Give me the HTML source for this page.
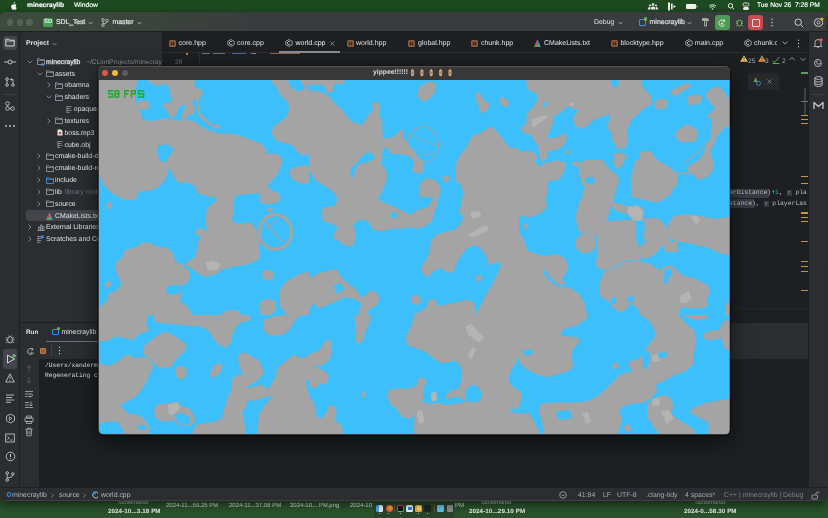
<!DOCTYPE html>
<html><head><meta charset="utf-8">
<style>
*{margin:0;padding:0;box-sizing:border-box}
html,body{width:828px;height:518px;overflow:hidden;background:#1f4a23;font-family:"Liberation Sans",sans-serif;color:#dfe1e5}
.a{position:absolute;white-space:nowrap}
html{-webkit-font-smoothing:antialiased;text-rendering:geometricPrecision}
body>div,body>svg{will-change:transform}
svg.a{overflow:visible}
.mt{font-size:6.7px;line-height:8px;color:#fff;top:2px;-webkit-text-stroke:.15px #fff}
.tt{font-size:7px;line-height:9px;color:#dfe1e5}
.row{font-size:6.9px;line-height:9px;color:#dfe1e5}
.st{font-size:6.9px;line-height:8px;color:#a8abb2}
.mono{font-family:"Liberation Mono",monospace}
.dl{font-size:6.2px;line-height:7px;color:#e6e9e6;font-weight:bold;letter-spacing:.1px}
.dg{font-size:6px;line-height:7px;color:#a3ada3;-webkit-text-stroke:.12px #a3ada3}
</style></head><body>
<!-- desktop -->
<div class="a" style="left:0;top:0;width:828px;height:518px;background:linear-gradient(180deg,#1d4a21 0%,#224c25 90%,#2a522c 100%)"></div>
<!-- menubar -->
<div class="a" style="left:0;top:0;width:828px;height:12px;background:#1e4a21"></div>
<svg class="a" style="left:10px;top:2px" width="7" height="8" viewBox="0 0 9 10"><path d="M6.2 1.2c-.5.6-1.1.9-1.6.9-.1-.6.2-1.2.6-1.6.4-.4 1-.6 1.5-.6 0 .5-.2 1-.5 1.3zM7.4 5.3c0-1 .8-1.5.9-1.6-.5-.7-1.2-.8-1.5-.8-.6-.1-1.2.4-1.6.4-.3 0-.8-.4-1.4-.3C3 3 2.3 3.4 1.9 4.1c-.8 1.4-.2 3.5.6 4.6.4.6.8 1.2 1.4 1.1.6 0 .8-.4 1.4-.4.7 0 .9.4 1.4.4.6 0 1-.6 1.3-1.1.4-.6.6-1.2.6-1.3 0 0-1.2-.5-1.2-2.1z" fill="#fff"/></svg>
<div class="a mt" style="left:27px;font-weight:bold">minecraylib</div>
<div class="a mt" style="left:74px">Window</div>
<svg class="a" style="left:646px;top:2px" width="180" height="9" viewBox="0 0 180 9">
  <g fill="#f0f0f0">
    <circle cx="7" cy="2.5" r="1.3"/><circle cx="4" cy="3.5" r="1"/><circle cx="10" cy="3.5" r="1"/><path d="M4.5 7.5c0-2 1-3 2.5-3s2.5 1 2.5 3z"/><path d="M1.8 7.5c0-1.5.7-2.5 2-2.5l.5.3-.5 2.2zM12.2 7.5c0-1.5-.7-2.5-2-2.5l-.5.3.5 2.2z"/>
    <rect x="22" y="0.5" width="2" height="8"/><rect x="25" y="1.5" width="1.6" height="6"/><path d="M27.5 3l2.5 1.5-2.5 1.5z"/>
    <rect x="40" y="2" width="10" height="5" rx="1"/><rect x="50.5" y="3.5" width="0.8" height="2"/>
  </g>
  <path d="M63 4.2a5 5 0 0 1 7 0M64.3 5.5a3 3 0 0 1 4.4 0" stroke="#f0f0f0" stroke-width="1" fill="none"/><circle cx="66.5" cy="7" r="0.8" fill="#f0f0f0"/>
  <circle cx="84.5" cy="3.8" r="2.2" stroke="#f0f0f0" stroke-width="1" fill="none"/><path d="M86.2 5.5l1.8 1.8" stroke="#f0f0f0" stroke-width="1"/>
  <rect x="97" y="1" width="6" height="3" rx="1.5" fill="none" stroke="#f0f0f0" stroke-width=".9"/><rect x="97" y="5" width="6" height="3" rx="1.5" fill="#f0f0f0"/>
</svg>
<div class="a mt" style="left:757px">Tue Nov 26</div>
<div class="a mt" style="left:795px">7:28 PM</div>

<!-- desktop labels -->
<div class="a dg" style="left:118px;top:500.3px">Screenshot</div>
<div class="a dl" style="left:108px;top:508px">2024-10...3.18 PM</div>
<div class="a dg" style="left:166px;top:502.8px;color:#c9d3c9">2024-11...59.25 PM</div>
<div class="a dg" style="left:229px;top:502.8px;color:#c9d3c9">2024-11...37.06 PM</div>
<div class="a dg" style="left:290px;top:502.8px;color:#c9d3c9">2024-10... PM.png</div>
<div class="a dg" style="left:350px;top:502.8px;color:#c9d3c9">2024-10</div>
<div class="a dg" style="left:455px;top:502.8px;color:#c9d3c9">PM</div>
<div class="a dg" style="left:481px;top:500.3px">Screenshot</div>
<div class="a dl" style="left:469px;top:508px">2024-10...29.10 PM</div>
<div class="a dg" style="left:695px;top:500.3px">Screenshot</div>
<div class="a dl" style="left:684px;top:508px">2024-0...58.30 PM</div>
<!-- dock -->
<div class="a" style="left:374px;top:503px;width:80px;height:16px;background:rgba(40,52,40,.45);border-radius:3px"></div>
<div class="a" style="left:376px;top:504.5px;width:6.6px;height:6.6px;background:linear-gradient(90deg,#4aa3f0 50%,#e8eef5 50%);border-radius:1.5px"></div>
<div class="a" style="left:385.5px;top:504.5px;width:6.6px;height:6.6px;background:radial-gradient(circle at 60% 40%,#f7b733 0,#e8612c 55%,#6a3fb5 100%);border-radius:50%"></div>
<div class="a" style="left:394.3px;top:504px;width:.6px;height:8px;background:#4c574c"></div>
<div class="a" style="left:397px;top:504.5px;width:7px;height:7px;background:#111;border:1px solid #e0356a;border-right-color:#2f9de0;border-bottom-color:#3fbf5f;border-radius:1.5px"></div>
<div class="a" style="left:406px;top:504.5px;width:7px;height:7px;background:#e9eef3;border-radius:1.5px"></div>
<div class="a" style="left:408px;top:506.5px;width:3.5px;height:3px;background:#2f86d8"></div>
<div class="a" style="left:415px;top:504.5px;width:7px;height:7px;background:#f0a43a;border-radius:1.5px"></div>
<div class="a" style="left:416.5px;top:506px;width:4px;height:4px;background:#f5d66a"></div>
<div class="a" style="left:424px;top:504.5px;width:7px;height:7px;background:#1e2420;border-radius:1.5px"></div>
<div class="a" style="left:434px;top:504px;width:.6px;height:8px;background:#4c574c"></div>
<div class="a" style="left:437px;top:505px;width:7px;height:6.5px;background:#62b9ee;border-radius:1px"></div>
<div class="a" style="left:446.5px;top:504.5px;width:5.5px;height:7px;background:#858b87;border-radius:0 0 1px 1px"></div>
<div class="a" style="left:378.5px;top:513px;width:1px;height:1px;background:#b0b8b0"></div>
<div class="a" style="left:388px;top:513px;width:1px;height:1px;background:#b0b8b0"></div>
<div class="a" style="left:400px;top:513px;width:1px;height:1px;background:#b0b8b0"></div>
<div class="a" style="left:418px;top:513px;width:1px;height:1px;background:#b0b8b0"></div>
<div class="a" style="left:427px;top:513px;width:1px;height:1px;background:#b0b8b0"></div>

<!-- IDE -->
<div class="a" style="left:0;top:12px;width:827px;height:489px;background:#1e1f22;border-radius:5px;overflow:hidden;box-shadow:0 0 0 .6px #4a4f4b inset,0 3px 9px rgba(0,0,0,.55)">
  <!-- title bar -->
  <div class="a" style="left:0;top:0;width:828px;height:20px;background:linear-gradient(90deg,#3c4a3d 0px,#3b453c 130px,#393b3d 270px);border-bottom:1px solid #1e1f22"></div>
  <div class="a" style="left:6.8px;top:7.3px;width:6.4px;height:6.4px;border-radius:50%;background:#58605a"></div>
  <div class="a" style="left:16.8px;top:7.3px;width:6.4px;height:6.4px;border-radius:50%;background:#58605a"></div>
  <div class="a" style="left:26.3px;top:7.3px;width:6.4px;height:6.4px;border-radius:50%;background:#58605a"></div>
  <div class="a" style="left:43px;top:5.8px;width:10.3px;height:9.4px;background:#4e9a53;border-radius:2px;font-size:6px;line-height:9.4px;color:#d9eefc;text-align:center;font-weight:bold">SD</div>
  <div class="a tt" style="left:56px;top:6px;font-size:7px;letter-spacing:-.15px;-webkit-text-stroke:.2px #dfe1e5">SDL_Test</div>
  <svg class="a" style="left:88px;top:9px" width="5" height="4"><path d="M.5 1l2 2 2-2" stroke="#b8bcb8" stroke-width=".8" fill="none"/></svg>
  <svg class="a" style="left:101px;top:6px" width="8" height="9" viewBox="0 0 8 9"><circle cx="2" cy="1.8" r="1.3" stroke="#c8ccc8" stroke-width=".8" fill="none"/><circle cx="2" cy="7.2" r="1.3" stroke="#c8ccc8" stroke-width=".8" fill="none"/><circle cx="6" cy="2.5" r="1.3" stroke="#c8ccc8" stroke-width=".8" fill="none"/><path d="M2 3.1v2.8M6 3.8c0 2-4 1.5-4 2.1" stroke="#c8ccc8" stroke-width=".8" fill="none"/></svg>
  <div class="a tt" style="left:112.4px;top:6px;font-size:6.9px;-webkit-text-stroke:.2px #dfe1e5">master</div>
  <svg class="a" style="left:137px;top:9px" width="5" height="4"><path d="M.5 1l2 2 2-2" stroke="#b8bcb8" stroke-width=".8" fill="none"/></svg>
  <div class="a tt" style="left:594px;top:6px;font-size:6.9px">Debug</div>
  <svg class="a" style="left:618px;top:9px" width="5" height="4"><path d="M.5 1l2 2 2-2" stroke="#b8bcb8" stroke-width=".8" fill="none"/></svg>
  <div class="a" style="left:638.5px;top:6.5px;width:7px;height:7.5px;border:1px solid #3b8ee8;border-radius:1px"></div>
  <div class="a" style="left:643.5px;top:5px;width:3.5px;height:3.5px;background:#5fb85f;border-radius:50%"></div>
  <div class="a tt" style="left:649.5px;top:6px;font-size:7px;-webkit-text-stroke:.2px #dfe1e5">minecraylib</div>
  <svg class="a" style="left:687px;top:9px" width="5" height="4"><path d="M.5 1l2 2 2-2" stroke="#b8bcb8" stroke-width=".8" fill="none"/></svg>
  <svg class="a" style="left:701px;top:5px" width="9" height="10" viewBox="0 0 9 10"><path d="M1 2.5h7M1.5 1.5h4.5l1.5 1v1H1.5zM3.5 3.5v5.5h2V3.5" stroke="#c0c4c0" stroke-width=".8" fill="none"/></svg>
  <div class="a" style="left:714.5px;top:3px;width:15px;height:15px;background:#4f9a55;border-radius:3px"></div>
  <svg class="a" style="left:717px;top:5.5px" width="10" height="10" viewBox="0 0 10 10"><path d="M7.5 3A3.2 3.2 0 1 0 8 6.5" stroke="#e8f0e8" stroke-width=".9" fill="none"/><path d="M6.5 1.2l1.5 2-2.2.6" stroke="#e8f0e8" stroke-width=".9" fill="none"/><path d="M4.2 4.2v3l2.2-1.5z" fill="#e8f0e8"/></svg>
  <svg class="a" style="left:735px;top:6px" width="9" height="9" viewBox="0 0 9 9"><ellipse cx="4.5" cy="5" rx="2.3" ry="3" stroke="#6cc46c" stroke-width=".9" fill="none"/><path d="M1 3l1.5 1M8 3L6.5 4M1 5.5h1.5M8 5.5H6.5M1.2 8l1.4-1M7.8 8L6.4 7M3 1.8l.7.8M6 1.8l-.7.8" stroke="#6cc46c" stroke-width=".8"/></svg>
  <div class="a" style="left:748px;top:3px;width:15px;height:15px;background:#c74c4c;border-radius:3px"></div>
  <div class="a" style="left:751.5px;top:6.5px;width:8px;height:8px;border:1px solid #f4dede;border-radius:1px"></div>
  <svg class="a" style="left:770px;top:6px" width="4" height="9"><circle cx="2" cy="1.2" r=".8" fill="#c0c4c0"/><circle cx="2" cy="4.5" r=".8" fill="#c0c4c0"/><circle cx="2" cy="7.8" r=".8" fill="#c0c4c0"/></svg>
  <svg class="a" style="left:794px;top:5.5px" width="10" height="10" viewBox="0 0 10 10"><circle cx="4.2" cy="4.2" r="3.2" stroke="#d0d4d0" stroke-width=".95" fill="none"/><path d="M6.6 6.6l2.6 2.6" stroke="#d0d4d0" stroke-width=".95"/></svg>
  <svg class="a" style="left:813px;top:5px" width="11" height="11" viewBox="0 0 11 11"><path d="M5.5 1l1 1.2 1.5-.3.4 1.5 1.4.6-.5 1.5.5 1.5-1.4.6-.4 1.5-1.5-.3-1 1.2-1-1.2-1.5.3-.4-1.5-1.4-.6.5-1.5-.5-1.5 1.4-.6.4-1.5 1.5.3z" stroke="#d0d4d0" stroke-width=".85" fill="none"/><circle cx="5.5" cy="5.5" r="1.5" stroke="#d0d4d0" stroke-width=".85" fill="none"/><circle cx="9" cy="2" r="1.6" fill="#e8a13c"/></svg>

  <!-- left strip -->
  <div class="a" style="left:0;top:20px;width:20px;height:455px;background:#2b2d30;border-right:1px solid #1e1f22"></div>
  <div class="a" style="left:3px;top:23.5px;width:14px;height:14px;background:#43454a;border-radius:3px"></div>
  <svg class="a" style="left:5px;top:26px" width="10" height="9" viewBox="0 0 10 9"><path d="M.8 1.2h3l1 1h4.4v5.8H.8z" stroke="#dfe1e5" stroke-width=".9" fill="none"/><path d="M.8 3h8.4" stroke="#dfe1e5" stroke-width=".7"/></svg>
  <svg class="a" style="left:4px;top:46px" width="12" height="8" viewBox="0 0 12 8"><circle cx="6" cy="4" r="2" stroke="#c9ccd1" stroke-width=".9" fill="none"/><path d="M0 4h4M8 4h4" stroke="#c9ccd1" stroke-width=".9"/></svg>
  <svg class="a" style="left:5px;top:65px" width="10" height="10" viewBox="0 0 10 10"><circle cx="2" cy="2" r="1.3" stroke="#c9ccd1" stroke-width=".85" fill="none"/><circle cx="2" cy="8" r="1.3" stroke="#c9ccd1" stroke-width=".85" fill="none"/><circle cx="8" cy="8" r="1.3" stroke="#c9ccd1" stroke-width=".85" fill="none"/><path d="M2 3.3v3.4M8 6.7V2.5H5.5M6.5 1.3L5.3 2.5l1.2 1.2" stroke="#c9ccd1" stroke-width=".85" fill="none"/></svg>
  <div class="a" style="left:4px;top:82px;width:12px;height:1px;background:#3c3f44"></div>
  <svg class="a" style="left:5px;top:89px" width="10" height="10" viewBox="0 0 10 10"><circle cx="2.5" cy="2.5" r="1.8" stroke="#c9ccd1" stroke-width=".85" fill="none"/><circle cx="2.5" cy="7.5" r="1.8" stroke="#c9ccd1" stroke-width=".85" fill="none"/><circle cx="7.5" cy="7.5" r="1.8" stroke="#c9ccd1" stroke-width=".85" fill="none"/><path d="M4.3 7.5h1.4M2.5 4.3v1.4" stroke="#c9ccd1" stroke-width=".85"/></svg>
  <svg class="a" style="left:4px;top:112px" width="12" height="4"><circle cx="2" cy="2" r=".9" fill="#c9ccd1"/><circle cx="6" cy="2" r=".9" fill="#c9ccd1"/><circle cx="10" cy="2" r=".9" fill="#c9ccd1"/></svg>
  <!-- lower left strip icons -->
  <svg class="a" style="left:5px;top:322px" width="10" height="10" viewBox="0 0 10 10"><ellipse cx="5" cy="5.8" rx="2.4" ry="3.2" stroke="#c9ccd1" stroke-width=".85" fill="none"/><path d="M.8 3.5l1.8 1M9.2 3.5l-1.8 1M.8 6h1.8M9.2 6H7.4M1 8.8l1.6-1M9 8.8l-1.6-1M3.3 1.5l.8 1M6.7 1.5l-.8 1" stroke="#c9ccd1" stroke-width=".8"/></svg>
  <div class="a" style="left:3px;top:337px;width:14px;height:20px;background:#43454a;border-radius:3px"></div>
  <svg class="a" style="left:5.5px;top:342px" width="10" height="10" viewBox="0 0 10 10"><path d="M1.5 1v8l7-4z" stroke="#dfe1e5" stroke-width=".9" fill="none" stroke-linejoin="round"/><circle cx="8" cy="1.8" r="1.8" fill="#5fb865"/></svg>
  <svg class="a" style="left:5px;top:361px" width="10" height="10" viewBox="0 0 10 10"><path d="M5 .8l4.3 8.2H.7z" stroke="#c9ccd1" stroke-width=".85" fill="none" stroke-linejoin="round"/><path d="M5 3.5v2.5M5 7v.8" stroke="#c9ccd1" stroke-width=".85"/></svg>
  <svg class="a" style="left:5px;top:381px" width="10" height="10" viewBox="0 0 10 10"><path d="M1 2h8M1 4.5h6M1 7h8M1 9.3h5" stroke="#c9ccd1" stroke-width=".85"/></svg>
  <svg class="a" style="left:4.5px;top:401px" width="11" height="11" viewBox="0 0 11 11"><path d="M5.5 1l4 2.3v4.4l-4 2.3-4-2.3V3.3z" stroke="#c9ccd1" stroke-width=".85" fill="none"/><path d="M4.3 3.8v3.4l2.8-1.7z" stroke="#c9ccd1" stroke-width=".7" fill="none"/></svg>
  <svg class="a" style="left:5px;top:421px" width="10" height="10" viewBox="0 0 10 10"><rect x=".7" y="1" width="8.6" height="8" stroke="#c9ccd1" stroke-width=".85" fill="none"/><path d="M2.5 3.5l1.8 1.5-1.8 1.5M5 7h2.5" stroke="#c9ccd1" stroke-width=".8" fill="none"/></svg>
  <svg class="a" style="left:4.5px;top:439px" width="11" height="11" viewBox="0 0 11 11"><circle cx="5.5" cy="5.5" r="4.3" stroke="#c9ccd1" stroke-width=".85" fill="none"/><path d="M5.5 3v3.2M5.5 7.3v.9" stroke="#c9ccd1" stroke-width="1"/></svg>
  <svg class="a" style="left:5px;top:459px" width="10" height="11" viewBox="0 0 10 11"><circle cx="2.2" cy="2" r="1.3" stroke="#c9ccd1" stroke-width=".85" fill="none"/><circle cx="2.2" cy="9" r="1.3" stroke="#c9ccd1" stroke-width=".85" fill="none"/><circle cx="7.8" cy="3" r="1.3" stroke="#c9ccd1" stroke-width=".85" fill="none"/><path d="M2.2 3.3v4.4M7.8 4.3c0 2.5-5.6 2-5.6 3.4" stroke="#c9ccd1" stroke-width=".85" fill="none"/></svg>

  <!-- project panel -->
  <div class="a" style="left:20px;top:20px;width:142px;height:291px;background:#2b2d30"></div>
  <div class="a row" style="left:26px;top:26.5px;font-weight:bold;font-size:6.8px">Project</div>
  <svg class="a" style="left:52px;top:30px" width="5" height="4"><path d="M.5 1l2 2 2-2" stroke="#9da0a8" stroke-width=".8" fill="none"/></svg>
  <svg class="a" style="left:27px;top:47.7px" width="6" height="4"><path d="M.6 .6l2.4 2.4 2.4-2.4" stroke="#8c8f94" stroke-width=".85" fill="none"/></svg><svg class="a" style="left:37px;top:46.2px" width="8" height="7" viewBox="0 0 8 7"><path d="M.5.8h2.3l.8.9h3.9v4.8H.5z" stroke="#9da0a8" stroke-width=".8" fill="none"/><path d="M.5 2.5h7" stroke="#9da0a8" stroke-width=".6"/></svg><div class="a" style="left:41px;top:50.5px;width:3px;height:3px;border-radius:50%;background:#3b8ee8"></div><div class="a row" style="left:46px;top:45.8px;font-size:6.8px;-webkit-text-stroke:.25px #dfe1e5">minecraylib</div><div class="a row" style="left:86px;top:45.8px;color:#8c8f94;font-size:6.65px">~/CLionProjects/minecraylib</div><svg class="a" style="left:36.5px;top:59.5px" width="6" height="4"><path d="M.6 .6l2.4 2.4 2.4-2.4" stroke="#8c8f94" stroke-width=".85" fill="none"/></svg><svg class="a" style="left:46px;top:58px" width="8" height="7" viewBox="0 0 8 7"><path d="M.5.8h2.3l.8.9h3.9v4.8H.5z" stroke="#9da0a8" stroke-width=".8" fill="none"/><path d="M.5 2.5h7" stroke="#9da0a8" stroke-width=".6"/></svg><div class="a row" style="left:55px;top:57.6px;">assets</div><svg class="a" style="left:46.5px;top:70.3px" width="4" height="6"><path d="M.6 .6l2.4 2.4-2.4 2.4" stroke="#8c8f94" stroke-width=".85" fill="none"/></svg><svg class="a" style="left:55px;top:69.8px" width="8" height="7" viewBox="0 0 8 7"><path d="M.5.8h2.3l.8.9h3.9v4.8H.5z" stroke="#9da0a8" stroke-width=".8" fill="none"/><path d="M.5 2.5h7" stroke="#9da0a8" stroke-width=".6"/></svg><div class="a row" style="left:64.5px;top:69.4px;">obamna</div><svg class="a" style="left:45.5px;top:83px" width="6" height="4"><path d="M.6 .6l2.4 2.4 2.4-2.4" stroke="#8c8f94" stroke-width=".85" fill="none"/></svg><svg class="a" style="left:55px;top:81.5px" width="8" height="7" viewBox="0 0 8 7"><path d="M.5.8h2.3l.8.9h3.9v4.8H.5z" stroke="#9da0a8" stroke-width=".8" fill="none"/><path d="M.5 2.5h7" stroke="#9da0a8" stroke-width=".6"/></svg><div class="a row" style="left:64.5px;top:81.1px;">shaders</div><svg class="a" style="left:66px;top:93.5px" width="6" height="7"><path d="M.5 .5h5M.5 2.5h4M.5 4.5h5M.5 6.5h3M1 .5v6" stroke="#9da0a8" stroke-width=".7"/></svg><div class="a row" style="left:73.8px;top:93.1px;">opaque.frag</div><svg class="a" style="left:46.5px;top:105.7px" width="4" height="6"><path d="M.6 .6l2.4 2.4-2.4 2.4" stroke="#8c8f94" stroke-width=".85" fill="none"/></svg><svg class="a" style="left:55px;top:105.2px" width="8" height="7" viewBox="0 0 8 7"><path d="M.5.8h2.3l.8.9h3.9v4.8H.5z" stroke="#9da0a8" stroke-width=".8" fill="none"/><path d="M.5 2.5h7" stroke="#9da0a8" stroke-width=".6"/></svg><div class="a row" style="left:64.5px;top:104.8px;">textures</div><svg class="a" style="left:57px;top:117.2px" width="6" height="7"><path d="M.5.5h3.5l1.5 1.5v4.5h-5z" fill="#e8e8e8"/><circle cx="3" cy="4" r="1.3" fill="#d94444"/></svg><div class="a row" style="left:64.5px;top:116.8px;">boss.mp3</div><svg class="a" style="left:57px;top:129.1px" width="6" height="7"><path d="M.5 .5h5M.5 2.5h4M.5 4.5h5M.5 6.5h3M1 .5v6" stroke="#9da0a8" stroke-width=".7"/></svg><div class="a row" style="left:64.5px;top:128.7px;">cube.obj</div><svg class="a" style="left:37px;top:141.3px" width="4" height="6"><path d="M.6 .6l2.4 2.4-2.4 2.4" stroke="#8c8f94" stroke-width=".85" fill="none"/></svg><svg class="a" style="left:46px;top:140.8px" width="8" height="7" viewBox="0 0 8 7"><path d="M.5.8h2.3l.8.9h3.9v4.8H.5z" stroke="#9da0a8" stroke-width=".8" fill="none"/><path d="M.5 2.5h7" stroke="#9da0a8" stroke-width=".6"/></svg><div class="a row" style="left:55px;top:140.4px;">cmake-build-debug</div><svg class="a" style="left:37px;top:153px" width="4" height="6"><path d="M.6 .6l2.4 2.4-2.4 2.4" stroke="#8c8f94" stroke-width=".85" fill="none"/></svg><svg class="a" style="left:46px;top:152.5px" width="8" height="7" viewBox="0 0 8 7"><path d="M.5.8h2.3l.8.9h3.9v4.8H.5z" stroke="#9da0a8" stroke-width=".8" fill="none"/><path d="M.5 2.5h7" stroke="#9da0a8" stroke-width=".6"/></svg><div class="a row" style="left:55px;top:152.1px;">cmake-build-release</div><svg class="a" style="left:37px;top:165px" width="4" height="6"><path d="M.6 .6l2.4 2.4-2.4 2.4" stroke="#8c8f94" stroke-width=".85" fill="none"/></svg><svg class="a" style="left:46px;top:164.5px" width="8" height="7" viewBox="0 0 8 7"><path d="M.5.8h2.3l.8.9h3.9v4.8H.5z" stroke="#4a9ce8" stroke-width=".8" fill="none"/><path d="M.5 2.5h7" stroke="#4a9ce8" stroke-width=".6"/></svg><div class="a row" style="left:55px;top:164.1px;">include</div><svg class="a" style="left:37px;top:176.8px" width="4" height="6"><path d="M.6 .6l2.4 2.4-2.4 2.4" stroke="#8c8f94" stroke-width=".85" fill="none"/></svg><svg class="a" style="left:46px;top:176.3px" width="8" height="7" viewBox="0 0 8 7"><path d="M.5.8h2.3l.8.9h3.9v4.8H.5z" stroke="#9da0a8" stroke-width=".8" fill="none"/><path d="M.5 2.5h7" stroke="#9da0a8" stroke-width=".6"/></svg><div class="a row" style="left:55px;top:175.9px;">lib</div><div class="a row" style="left:65px;top:175.9px;color:#6f737a">library root</div><svg class="a" style="left:37px;top:188.5px" width="4" height="6"><path d="M.6 .6l2.4 2.4-2.4 2.4" stroke="#8c8f94" stroke-width=".85" fill="none"/></svg><svg class="a" style="left:46px;top:188px" width="8" height="7" viewBox="0 0 8 7"><path d="M.5.8h2.3l.8.9h3.9v4.8H.5z" stroke="#9da0a8" stroke-width=".8" fill="none"/><path d="M.5 2.5h7" stroke="#9da0a8" stroke-width=".6"/></svg><div class="a row" style="left:55px;top:187.6px;">source</div><div class="a" style="left:26px;top:198.3px;width:136px;height:10.5px;background:#43454a;border-radius:3px 0 0 3px"></div><svg class="a" style="left:46px;top:199.6px" width="7" height="8" viewBox="0 0 7 8"><path d="M3.5.3L6.8 7.7H.2z" fill="#3a8ee6"/><path d="M3.5.3L.2 7.7h3.3z" fill="#e53d3d"/><path d="M.2 7.7h6.6L3.5 4.8z" fill="#4cb050"/></svg><div class="a row" style="left:55px;top:199.7px;">CMakeLists.txt</div><svg class="a" style="left:28px;top:212.3px" width="4" height="6"><path d="M.6 .6l2.4 2.4-2.4 2.4" stroke="#8c8f94" stroke-width=".85" fill="none"/></svg><svg class="a" style="left:37px;top:211.8px" width="8" height="7"><path d="M.5 6.5h7M1.5 6.5V3h1.5v3.5M3.5 6.5V1h1.5v5.5M5.5 6.5V2.5H7v4" stroke="#9da0a8" stroke-width=".75" fill="none"/></svg><div class="a row" style="left:46px;top:211.4px;">External Libraries</div><svg class="a" style="left:28px;top:224px" width="4" height="6"><path d="M.6 .6l2.4 2.4-2.4 2.4" stroke="#8c8f94" stroke-width=".85" fill="none"/></svg><svg class="a" style="left:37px;top:223px" width="7" height="8"><path d="M.5 1.5h4M.5 3.5h4M.5 5.5h4M.5 7.5h3M1 1v6.5" stroke="#9da0a8" stroke-width=".7"/><circle cx="5.3" cy="1.8" r="1.6" fill="#3b8ee8"/></svg><div class="a row" style="left:46px;top:223.1px;">Scratches and Consoles</div>
  <!-- run panel -->
  <!-- editor -->
  <div class="a" style="left:162px;top:20px;width:646px;height:455px;background:#1e1f22"></div>
  <div class="a" style="left:162px;top:40px;width:646px;height:1px;background:#2b2d30"></div>
  <div class="a" style="left:169px;top:27.5px;width:7px;height:7px;background:#8a5a3c;border-radius:1.5px"></div><svg class="a" style="left:169px;top:27.5px" width="7" height="7"><path d="M2.5 1.5v4M4.5 1.5v4M1.5 3h4M1.5 4.3h4" stroke="#2b1d14" stroke-width=".6"/></svg><div class="a" style="left:178.6px;top:26.5px;font-size:7px;line-height:9px;color:#dfe1e5;">core.hpp</div><svg class="a" style="left:226.5px;top:27px" width="8" height="8" viewBox="0 0 8 8"><path d="M4 .5L7.2 2.3v3.4L4 7.5.8 5.7V2.3z" stroke="#c9ccd1" stroke-width=".7" fill="none"/><path d="M5.2 3A1.6 1.6 0 1 0 5.2 5" stroke="#c9ccd1" stroke-width=".8" fill="none"/></svg><div class="a" style="left:237px;top:26.5px;font-size:7px;line-height:9px;color:#dfe1e5;">core.cpp</div><svg class="a" style="left:284.5px;top:27px" width="8" height="8" viewBox="0 0 8 8"><path d="M4 .5L7.2 2.3v3.4L4 7.5.8 5.7V2.3z" stroke="#c9ccd1" stroke-width=".7" fill="none"/><path d="M5.2 3A1.6 1.6 0 1 0 5.2 5" stroke="#c9ccd1" stroke-width=".8" fill="none"/></svg><div class="a" style="left:295.5px;top:26.5px;font-size:7px;line-height:9px;color:#dfe1e5;color:#eceef2;">world.cpp</div><div class="a" style="left:346.5px;top:27.5px;width:7px;height:7px;background:#8a5a3c;border-radius:1.5px"></div><svg class="a" style="left:346.5px;top:27.5px" width="7" height="7"><path d="M2.5 1.5v4M4.5 1.5v4M1.5 3h4M1.5 4.3h4" stroke="#2b1d14" stroke-width=".6"/></svg><div class="a" style="left:356px;top:26.5px;font-size:7px;line-height:9px;color:#dfe1e5;">world.hpp</div><div class="a" style="left:408px;top:27.5px;width:7px;height:7px;background:#8a5a3c;border-radius:1.5px"></div><svg class="a" style="left:408px;top:27.5px" width="7" height="7"><path d="M2.5 1.5v4M4.5 1.5v4M1.5 3h4M1.5 4.3h4" stroke="#2b1d14" stroke-width=".6"/></svg><div class="a" style="left:418.1px;top:26.5px;font-size:7px;line-height:9px;color:#dfe1e5;">global.hpp</div><div class="a" style="left:471px;top:27.5px;width:7px;height:7px;background:#8a5a3c;border-radius:1.5px"></div><svg class="a" style="left:471px;top:27.5px" width="7" height="7"><path d="M2.5 1.5v4M4.5 1.5v4M1.5 3h4M1.5 4.3h4" stroke="#2b1d14" stroke-width=".6"/></svg><div class="a" style="left:480.9px;top:26.5px;font-size:7px;line-height:9px;color:#dfe1e5;">chunk.hpp</div><svg class="a" style="left:534.2px;top:27px" width="7" height="8" viewBox="0 0 7 8"><path d="M3.5.3L6.8 7.7H.2z" fill="#3a8ee6"/><path d="M3.5.3L.2 7.7h3.3z" fill="#e53d3d"/><path d="M.2 7.7h6.6L3.5 4.8z" fill="#4cb050"/></svg><div class="a" style="left:544px;top:26.5px;font-size:7px;line-height:9px;color:#dfe1e5;">CMakeLists.txt</div><div class="a" style="left:611px;top:27.5px;width:7px;height:7px;background:#8a5a3c;border-radius:1.5px"></div><svg class="a" style="left:611px;top:27.5px" width="7" height="7"><path d="M2.5 1.5v4M4.5 1.5v4M1.5 3h4M1.5 4.3h4" stroke="#2b1d14" stroke-width=".6"/></svg><div class="a" style="left:620.4px;top:26.5px;font-size:7px;line-height:9px;color:#dfe1e5;">blocktype.hpp</div><svg class="a" style="left:685px;top:27px" width="8" height="8" viewBox="0 0 8 8"><path d="M4 .5L7.2 2.3v3.4L4 7.5.8 5.7V2.3z" stroke="#c9ccd1" stroke-width=".7" fill="none"/><path d="M5.2 3A1.6 1.6 0 1 0 5.2 5" stroke="#c9ccd1" stroke-width=".8" fill="none"/></svg><div class="a" style="left:694.8px;top:26.5px;font-size:7px;line-height:9px;color:#dfe1e5;">main.cpp</div><svg class="a" style="left:744px;top:27px" width="8" height="8" viewBox="0 0 8 8"><path d="M4 .5L7.2 2.3v3.4L4 7.5.8 5.7V2.3z" stroke="#c9ccd1" stroke-width=".7" fill="none"/><path d="M5.2 3A1.6 1.6 0 1 0 5.2 5" stroke="#c9ccd1" stroke-width=".8" fill="none"/></svg><div class="a" style="left:754px;top:26.5px;font-size:7px;line-height:9px;color:#dfe1e5;"><span style="display:inline-block;width:23px;overflow:hidden;vertical-align:top">chunk.cpp</span></div><div class="a" style="left:279px;top:39px;width:61px;height:1.5px;background:#8c8f94"></div><svg class="a" style="left:330px;top:28.5px" width="5" height="5"><path d="M.5.5l4 4M4.5.5l-4 4" stroke="#9da0a8" stroke-width=".8"/></svg><svg class="a" style="left:782px;top:29px" width="6" height="4"><path d="M.6 .6l2.4 2.4 2.4-2.4" stroke="#b0b3b8" stroke-width=".85" fill="none"/></svg><svg class="a" style="left:796.5px;top:26.5px" width="3" height="9"><circle cx="1.5" cy="1.2" r=".7" fill="#b0b3b8"/><circle cx="1.5" cy="4.5" r=".7" fill="#b0b3b8"/><circle cx="1.5" cy="7.8" r=".7" fill="#b0b3b8"/></svg>
  <div class="a" style="left:202px;top:41px;width:8px;height:1.2px;background:#6d6f74"></div>
  <div class="a" style="left:213px;top:41px;width:12px;height:1.2px;background:#6d6f74"></div>
  <div class="a" style="left:232px;top:41px;width:14px;height:1.2px;background:#3f6f9e"></div>
  <div class="a" style="left:251px;top:41px;width:5px;height:1.2px;background:#7d7f84"></div>
  <div class="a" style="left:270px;top:41px;width:30px;height:1.2px;background:#8a6550"></div>
  <div class="a" style="left:186px;top:41px;width:2px;height:1.5px;background:#c77a3c"></div>
  <div class="a" style="left:199px;top:41px;width:1px;height:20px;background:#2b2d30"></div>
  <div class="a" style="left:175px;top:46.5px;font-size:6.5px;line-height:8px;color:#6f737a">28</div>
  <!-- right editor strip parts -->
  <div class="a mono" style="left:730px;top:176.5px;width:39px;height:9px;background:#393b40"></div>
  <div class="a mono" style="left:730px;top:187px;width:24px;height:9px;background:#393b40"></div>
  <div class="a mono" style="left:729px;top:177px;font-size:6.4px;line-height:8px;color:#bcbec4">erDistance<span style="color:#bcbec4">)+</span><span style="color:#2aacb8">1</span>, <span style="background:#393b40;color:#8c8f94;font-size:5px;padding:0 1px">z</span> pla</div>
  <div class="a mono" style="left:729px;top:187.5px;font-size:6.4px;line-height:8px;color:#bcbec4">stance), <span style="background:#393b40;color:#8c8f94;font-size:5px;padding:0 1px">z</span> playerLas</div>
  <!-- warnings -->
  <svg class="a" style="left:740px;top:43px" width="8" height="7" viewBox="0 0 8 7"><path d="M4 .3l3.8 6.4H.2z" fill="#f2c55c"/><path d="M4 2.3v2.3M4 5.3v.6" stroke="#3a2f10" stroke-width=".8"/></svg>
  <div class="a" style="left:748px;top:45.8px;font-size:6.6px;line-height:8px;color:#a8abb2">25</div>
  <svg class="a" style="left:757.5px;top:43px" width="8" height="7" viewBox="0 0 8 7"><path d="M4 .3l3.8 6.4H.2z" fill="#d99a4e"/><path d="M4 2.3v2.3M4 5.3v.6" stroke="#3a2f10" stroke-width=".8"/></svg>
  <div class="a" style="left:765px;top:45.8px;font-size:6.6px;line-height:8px;color:#a8abb2">3</div>
  <svg class="a" style="left:772px;top:43.5px" width="8" height="8" viewBox="0 0 8 8"><path d="M.5 4.5l2 2L7.5 1M.5 7.5h7" stroke="#5fb865" stroke-width=".9" fill="none"/></svg>
  <div class="a" style="left:782px;top:45.8px;font-size:6.6px;line-height:8px;color:#a8abb2">2</div>
  <svg class="a" style="left:789px;top:44.5px" width="6" height="4"><path d="M.5 3l2.5-2.5L5.5 3" stroke="#a8abb2" stroke-width=".8" fill="none"/></svg>
  <svg class="a" style="left:800px;top:44.5px" width="6" height="4"><path d="M.5 1l2.5 2.5L5.5 1" stroke="#a8abb2" stroke-width=".8" fill="none"/></svg>
  <!-- floating widget -->
  <div class="a" style="left:747.5px;top:61px;width:31.5px;height:16.5px;background:#26282b;border-radius:2px"></div>
  <svg class="a" style="left:753px;top:64.5px" width="8" height="9" viewBox="0 0 8 9"><path d="M2.5.5L.5 5h4z" fill="#4caf50"/><path d="M2.5.5l2 4.5" stroke="#e05050" stroke-width=".6"/><circle cx="5.5" cy="6.3" r="2" stroke="#3d8ee0" stroke-width=".9" fill="none"/></svg>
  <svg class="a" style="left:767px;top:66.5px" width="5" height="5"><path d="M.5.5l4 4M4.5.5l-4 4" stroke="#8c8f94" stroke-width=".8"/></svg>
  <!-- scrollbar marks -->
  <div class="a" style="left:801px;top:60px;width:7px;height:1.5px;background:#5a9e60"></div>
  <div class="a" style="left:803.5px;top:76px;width:2px;height:28px;background:#3e4044;border-radius:1px"></div>
  <div class="a" style="left:801px;top:88.5px;width:7px;height:1.2px;background:#6f737a"></div>
  <div class="a" style="left:801px;top:103px;width:7px;height:1.2px;background:#c8914a"></div>
  <div class="a" style="left:801px;top:107px;width:7px;height:1.2px;background:#c8914a"></div>
  <div class="a" style="left:801px;top:111px;width:7px;height:1.2px;background:#c8914a"></div>
  <div class="a" style="left:801px;top:164px;width:7px;height:1.2px;background:#c8914a"></div>
  <div class="a" style="left:801px;top:171px;width:7px;height:1.2px;background:#c8914a"></div>
  <div class="a" style="left:801px;top:200px;width:7px;height:1.8px;background:#c8914a"></div>
  <div class="a" style="left:801px;top:204.5px;width:7px;height:1.2px;background:#c8914a"></div>
  <div class="a" style="left:801px;top:208.5px;width:7px;height:1.2px;background:#c8914a"></div>
  <div class="a" style="left:801px;top:229px;width:7px;height:1.2px;background:#c8914a"></div>
  <div class="a" style="left:801px;top:248.5px;width:7px;height:1.2px;background:#c8914a"></div>
  <div class="a" style="left:801px;top:254px;width:7px;height:1.2px;background:#c8914a"></div>
  <div class="a" style="left:801px;top:259px;width:7px;height:1.2px;background:#c8914a"></div>
  <div class="a" style="left:801px;top:277.5px;width:7px;height:1.2px;background:#c8914a"></div>
  <div class="a" style="left:162px;top:296px;width:646px;height:1px;background:#25272a"></div>
  <div class="a" style="left:20px;top:310px;width:788px;height:165px;background:#2b2d30;border-top:1px solid #1e1f22"></div>
  <div class="a" style="left:39px;top:347px;width:769px;height:128px;background:#1e1f22"></div>
  <!--RUNBG-->
  <div class="a row" style="left:26px;top:315.5px;font-weight:bold;font-size:6.4px">Run</div>
  <div class="a" style="left:52px;top:316.5px;width:6.5px;height:6.5px;border:1px solid #3b8ee8;border-radius:1px"></div>
  <div class="a" style="left:56.5px;top:315px;width:3px;height:3px;background:#5fb85f;border-radius:50%"></div>
  <div class="a row" style="left:61.5px;top:315.5px;font-size:6.9px">minecraylib</div>
  <div class="a" style="left:46px;top:329px;width:116px;height:1px;background:#6f737a"></div>
  <svg class="a" style="left:25.5px;top:334.5px" width="9" height="9" viewBox="0 0 9 9"><path d="M7 2.5A3 3 0 1 0 7.5 5.5" stroke="#c9ccd1" stroke-width=".85" fill="none"/><path d="M5.8 1l1.4 1.6-1.9.6" stroke="#c9ccd1" stroke-width=".8" fill="none"/><path d="M4.5 4.5v3l2.3-1.5z" fill="#5fb865"/></svg>
  <div class="a" style="left:40px;top:335.5px;width:6px;height:6.5px;background:#9b5b38;border:1px solid #c77a4a;border-radius:1px"></div>
  <div class="a" style="left:51px;top:333px;width:1px;height:11px;background:#43454a"></div>
  <svg class="a" style="left:58px;top:334px" width="3" height="9"><circle cx="1.5" cy="1.2" r=".7" fill="#c9ccd1"/><circle cx="1.5" cy="4.5" r=".7" fill="#c9ccd1"/><circle cx="1.5" cy="7.8" r=".7" fill="#c9ccd1"/></svg>
  <!--CONSBG-->
  <div class="a mono" style="left:45px;top:349.5px;font-size:6.3px;line-height:8px;color:#dcdfe4">/Users/xanderm</div>
  <div class="a mono" style="left:45px;top:360px;font-size:6.3px;line-height:8px;color:#dcdfe4">Regenerating c</div>
  <svg class="a" style="left:24px;top:351px" width="10" height="90" viewBox="0 0 10 90">
    <path d="M5 8.5V2.5M2.8 4.7L5 2.5l2.2 2.2" stroke="#5d6066" stroke-width=".8" fill="none"/>
    <path d="M5 14v6M2.8 17.8L5 20l2.2-2.2" stroke="#5d6066" stroke-width=".8" fill="none"/>
    <path d="M1 28.5h8M1 31h6.5c1.2 0 1.2 2.5 0 2.5H5M1 33.5h2.5M6 32.5l-1 1 1 1" stroke="#b8bbc0" stroke-width=".75" fill="none"/>
    <path d="M1 39.5h4M1 42h4M1 44.5h8M7 38.5v4.5M5.5 41.5L7 43l1.5-1.5" stroke="#b8bbc0" stroke-width=".75" fill="none"/>
    <path d="M2.5 53h5v2h-5zM1 55h8v3.5H1zM2.5 58.5h5v2h-5z" stroke="#b8bbc0" stroke-width=".75" fill="none"/>
    <path d="M1.5 66.3h7M3.5 66.3v-1.2h3v1.2M2.3 66.3l.6 6.5h4.2l.6-6.5M4 67.8v3.5M6 67.8v3.5" stroke="#b8bbc0" stroke-width=".75" fill="none"/>
  </svg>

  <!-- right strip -->
  <div class="a" style="left:808px;top:20px;width:20px;height:455px;background:#2b2d30;border-left:1px solid #1e1f22"></div>
  <svg class="a" style="left:813px;top:26px" width="10" height="10" viewBox="0 0 10 10"><path d="M2 7.5V4.5a3 3 0 0 1 6 0v3l1 1H1zM4 9.2h2" stroke="#c9ccd1" stroke-width=".85" fill="none"/><circle cx="8" cy="2" r="1.8" fill="#e05555"/></svg>
  <svg class="a" style="left:813px;top:46px" width="10" height="10" viewBox="0 0 10 10"><path d="M8.5 5A3.5 3.5 0 1 1 5 1.5c2 0 3 1.2 3 2.5S7 6 5.5 6 3.5 5 3.5 4.3 4 3 5 3" stroke="#c9ccd1" stroke-width=".85" fill="none"/></svg>
  <svg class="a" style="left:813.5px;top:64px" width="9" height="11" viewBox="0 0 9 11"><ellipse cx="4.5" cy="2" rx="3.7" ry="1.4" stroke="#c9ccd1" stroke-width=".85" fill="none"/><path d="M.8 2v7c0 .8 1.7 1.4 3.7 1.4S8.2 9.8 8.2 9V2M.8 4.5c0 .8 1.7 1.4 3.7 1.4s3.7-.6 3.7-1.4M.8 7c0 .8 1.7 1.4 3.7 1.4S8.2 7.8 8.2 7" stroke="#c9ccd1" stroke-width=".85" fill="none"/></svg>
  <div class="a" style="left:812px;top:82px;width:12px;height:1px;background:#3c3f44"></div>
  <svg class="a" style="left:812.5px;top:89px" width="11" height="9" viewBox="0 0 11 9"><path d="M1 8V1.5l4.5 4 4.5-4V8" stroke="#c9ccd1" stroke-width="1.3" fill="none" stroke-linejoin="round"/></svg>
  <!-- status bar -->
  <div class="a" style="left:0;top:475px;width:828px;height:14px;background:#2b2d30;border-top:1px solid #1e1f22"></div>
  <div class="a" style="left:6.5px;top:480px;width:4.5px;height:5px;border:1px solid #3b8ee8;border-radius:50%"></div>
  <div class="a st" style="left:12px;top:479.8px;color:#b7bac0">minecraylib</div>
  <svg class="a" style="left:51px;top:480.5px" width="3" height="5"><path d="M.5.5l2 2-2 2" stroke="#8c8f94" stroke-width=".7" fill="none"/></svg>
  <div class="a st" style="left:59px;top:479.8px;color:#b7bac0">source</div>
  <svg class="a" style="left:82.5px;top:480.5px" width="3" height="5"><path d="M.5.5l2 2-2 2" stroke="#8c8f94" stroke-width=".7" fill="none"/></svg>
  <svg class="a" style="left:91.5px;top:478.5px" width="8" height="8" viewBox="0 0 8 8"><path d="M6.2 2.2A3 3 0 1 0 6.2 5.8" stroke="#c9ccd1" stroke-width=".9" fill="none"/><circle cx="2.2" cy="2" r="1.5" fill="#3b8ee8"/></svg>
  <div class="a st" style="left:101px;top:479.8px;color:#b7bac0">world.cpp</div>
  <svg class="a" style="left:559px;top:478.5px" width="8" height="8" viewBox="0 0 8 8"><circle cx="4" cy="4" r="3.3" stroke="#a8abb2" stroke-width=".8" fill="none"/><path d="M2.5 3.5L4 5l1.5-1.5" stroke="#a8abb2" stroke-width=".8" fill="none"/></svg>
  <div class="a st" style="left:578px;top:479.8px">41:84</div>
  <div class="a st" style="left:603px;top:479.8px">LF</div>
  <div class="a st" style="left:617px;top:479.8px">UTF-8</div>
  <div class="a st" style="left:646px;top:479.8px">.clang-tidy</div>
  <div class="a st" style="left:685px;top:479.8px">4 spaces*</div>
  <div class="a st" style="left:724px;top:479.8px;color:#7d8087">C++ | minecraylib | Debug</div>
  <div class="a" style="left:0;top:488px;width:828px;height:1px;background:#3e4043"></div>
  <svg class="a" style="left:811px;top:478.5px" width="9" height="9" viewBox="0 0 9 9"><rect x="1" y="4" width="5.5" height="4" rx=".6" stroke="#a8abb2" stroke-width=".8" fill="none"/><path d="M5 4V2.5a1.6 1.6 0 0 1 3.2 0" stroke="#a8abb2" stroke-width=".8" fill="none"/></svg>
</div>

<!-- game window -->
<div class="a" style="left:98.3px;top:65.5px;width:631.7px;height:368.7px;border-radius:5px;background:#383838;box-shadow:0 6px 22px rgba(0,0,0,.6),0 0 0 .5px rgba(0,0,0,.6)"></div>
<div class="a" style="left:98.3px;top:65.5px;width:631.7px;height:14.4px;background:#383838;border-radius:5px 5px 0 0;border-top:.6px solid #555"></div>
<div class="a" style="left:102.3px;top:69.5px;width:6.3px;height:6.3px;border-radius:50%;background:#e0524a"></div>
<div class="a" style="left:112px;top:69.5px;width:6.3px;height:6.3px;border-radius:50%;background:#f0b73c"></div>
<div class="a" style="left:121.8px;top:69.5px;width:6.3px;height:6.3px;border-radius:50%;background:#5c5c5c"></div>
<div class="a" style="left:372.5px;top:68.5px;font-size:6.8px;line-height:8px;color:#d8d8d8;font-weight:bold">yippee!!!!!!</div>
<svg class="a" style="left:408px;top:68px" width="46" height="10" viewBox="0 0 46 10"><defs><linearGradient id="eg" x1="0" y1="0" x2="0" y2="1"><stop offset="0" stop-color="#e9c0ad"/><stop offset=".45" stop-color="#c98b3e"/><stop offset="1" stop-color="#e2ada3"/></linearGradient></defs><g id="emo"><ellipse cx="4.5" cy="4.8" rx="1.7" ry="3.5" fill="url(#eg)"/><ellipse cx="4.5" cy="4.6" rx=".8" ry="1.2" fill="#7f8a94"/></g><use href="#emo" x="9.4"/><use href="#emo" x="18.7"/><use href="#emo" x="28.1"/><use href="#emo" x="37.5"/></svg>
<svg class="a" style="left:0;top:0" width="828" height="518" viewBox="0 0 828 518">
<defs><clipPath id="mc"><path d="M98.8 79.9 H729.8 V429 Q729.8 434 724.8 434 H103.8 Q98.8 434 98.8 429 Z"/></clipPath>
<filter id="nz" x="0" y="0" width="100%" height="100%"><feTurbulence type="fractalNoise" baseFrequency="0.9" numOctaves="1" seed="3"/><feColorMatrix type="matrix" values="0 0 0 0 0.64  0 0 0 0 0.64  0 0 0 0 0.64  0 0 0 -0.9 0.62"/></filter>
<clipPath id="t0"><rect x="99" y="79" width="210" height="118"/></clipPath>
<clipPath id="t1"><rect x="309" y="79" width="210" height="118"/></clipPath>
<clipPath id="t2"><rect x="640" y="79" width="89" height="118"/><rect x="519" y="160" width="121" height="37"/></clipPath>
<clipPath id="t3"><rect x="519" y="79" width="121" height="81"/></clipPath>
<clipPath id="t4"><rect x="99" y="197" width="210" height="118"/></clipPath>
<clipPath id="t5"><rect x="309" y="197" width="210" height="118"/></clipPath>
<clipPath id="t6"><rect x="519" y="197" width="51" height="118"/></clipPath>
<clipPath id="t7"><rect x="570" y="190" width="159" height="70"/></clipPath>
<clipPath id="t8"><rect x="570" y="260" width="159" height="55"/><rect x="540" y="285" width="30" height="30"/></clipPath>
<clipPath id="t9"><rect x="99" y="315" width="210" height="35"/></clipPath>
<clipPath id="t10"><rect x="99" y="350" width="131" height="86"/></clipPath>
<clipPath id="t11"><rect x="230" y="350" width="79" height="86"/></clipPath>
<clipPath id="t12"><rect x="309" y="315" width="210" height="121"/></clipPath>
<clipPath id="t13"><rect x="519" y="315" width="210" height="121"/></clipPath>
</defs>
<g clip-path="url(#mc)">
<rect x="98.8" y="79.9" width="631" height="354.1" fill="#3dbffb"/>
<g clip-path="url(#t0)"><g transform="translate(99,79) scale(0.253623)"><polygon fill="#a4a4a4" points="0,0 155,0 148,25 140,60 143,90 150,110 165,135 172,160 200,167 240,160 270,155 300,162 330,165 350,160 375,168 400,185 440,205 475,215 520,215 560,225 600,240 640,255 660,280 660,295 700,295 720,310 720,340 700,380 665,420 680,440 710,450 715,465 690,490 660,485 640,465 630,450 570,455 540,460 510,478 480,475 420,460 390,450 375,420 345,408 320,410 300,395 275,350 270,375 255,405 230,430 200,440 155,445 150,465 130,475 90,470 50,450 20,420 0,375"/><polygon fill="#a4a4a4" points="252,5 381,5 374,26 390,36 407,45 409,64 397,74 393,88 395,114 400,138 414,148 433,167 452,181 471,177 476,190 466,198 447,188 428,176 409,162 390,143 386,119 386,90 376,81 366,90 381,119 371,138 352,145 343,157 328,164 324,143 333,124 343,110 333,100 314,112 305,138 286,157 276,138 250,102 271,95 286,86 281,57 276,29 252,19"/><polygon fill="#a4a4a4" points="190,0 381,0 381,5 252,19 233,29 200,14"/><polygon fill="#a4a4a4" points="150,88 190,86 202,100 195,118 160,122 145,110"/><polygon fill="#a4a4a4" points="675,0 745,0 750,25 780,50 810,40 828,25 828,300 800,300 780,285 765,262 725,250 695,240 680,210 690,185 715,170 740,150 750,120 745,90 720,70 700,35"/><polygon fill="#a4a4a4" points="790,0 828,0 828,25 810,30"/><polygon fill="#a4a4a4" points="750,360 780,345 810,340 828,345 828,410 800,415 770,400 755,385"/></g></g>
<g clip-path="url(#t1)"><g transform="translate(309,79) scale(0.253623)"><polygon fill="#a4a4a4" points="0,0 140,0 140,18 100,20 95,50 70,55 60,25 0,22"/><polygon fill="#a4a4a4" points="0,50 25,45 55,55 85,75 105,100 130,120 150,148 168,170 210,180 225,160 240,135 255,118 247,100 258,88 276,97 281,125 278,150 289,162 289,202 289,290 289,316 282,330 302,356 309,383 295,430 282,457 269,477 114,477 94,444 67,424 40,410 20,390 0,356"/><polygon fill="#a4a4a4" points="289,202 295,236 329,229 349,215 362,200 373,203.5 369.5,226 388.4,253 407.7,276 426.6,302 449.5,325 453.4,359 440,375 407.7,365 415,333 403.8,310 373,299 339,295 322,296 309,269 295,276 289,290"/><ellipse cx="450" cy="259" rx="61" ry="70" fill="none" stroke="#a4a4a4" stroke-width="4"/><polyline fill="none" stroke="#a4a4a4" stroke-width="3" stroke-linejoin="round" stroke-linecap="round" points="395,215 430,235 470,250 505,262"/><polyline fill="none" stroke="#a4a4a4" stroke-width="3" stroke-linejoin="round" stroke-linecap="round" points="420,280 450,300 490,290"/><polygon fill="#a4a4a4" points="440,30 470,10 500,15 500,45 480,75 450,90 428,70 430,45"/><polygon fill="#a4a4a4" points="655,60 670,50 690,85 712,95 705,125 680,135 665,100"/><polygon fill="#a4a4a4" points="750,80 765,70 790,90 785,110 760,105"/><polygon fill="#a4a4a4" points="720,185 760,230 790,270 828,275 828,465 610,465 600,420 580,400 575,345 595,300 620,270 640,230 680,210"/><polygon fill="#a4a4a4" points="440,410 465,390 500,400 520,430 515,465 435,465"/><polygon fill="#a4a4a4" points="525,385 550,380 555,400 535,410"/></g></g>
<g clip-path="url(#t2)"><g transform="translate(519,79) scale(0.253623)"><polygon fill="#a4a4a4" points="30,0 480,0 490,35 520,65 522,100 500,112 470,135 445,165 438,190 425,215 420,250 400,275 375,275 365,250 370,220 362,195 345,190 360,165 358,140 325,150 295,165 265,180 240,195 215,185 212,155 225,125 205,108 180,115 150,125 130,150 120,185 125,215 150,230 180,215 190,210 190,250 175,280 145,285 120,280 105,300 95,330 80,310 75,270 55,260 50,225 25,220 5,200 10,180 30,160 25,130 45,105 55,80 40,45"/><polygon fill="#a4a4a4" points="0,290 30,285 60,320 80,345 100,332 150,320 185,330 180,360 160,395 140,400 120,400 110,430 110,465 0,465"/><polygon fill="#a4a4a4" points="240,330 270,315 330,320 360,360 380,370 395,395 385,430 370,465 255,465 260,430 245,400 235,370"/><polygon fill="#a4a4a4" points="208,330 230,322 242,338 225,348"/><polygon fill="#a4a4a4" points="375,310 405,290 420,310 405,345 385,355 370,330"/><polygon fill="#a4a4a4" points="480,285 520,285 545,320 590,345 625,375 625,415 600,440 570,465 445,465 440,400 455,335"/><polygon fill="#a4a4a4" points="594,46 664,15 683,27 614,69"/><polygon fill="#a4a4a4" points="530,95 556,77 579,81 587,100 568,123 540,115"/><polygon fill="#a4a4a4" points="660,73 698,58 725,73 710,100 671,104"/><polygon fill="#a4a4a4" points="733,58 760,35 790,29 814,58 828,77 828,185 810,192 783,223 767,261 754,288 767,331 764,361 744,385 710,398 694,385 664,361 671,338 706,323 729,292 737,261 756,231 757,185 760,158 741,146 773,115 744,81"/><polygon fill="#a4a4a4" points="618,208 664,177 706,204 698,246 641,250 618,231"/><polyline fill="none" stroke="#a4a4a4" stroke-width="6" stroke-linejoin="round" stroke-linecap="round" points="625,372 680,372 725,355"/><polyline fill="none" stroke="#a4a4a4" stroke-width="4" stroke-linejoin="round" stroke-linecap="round" points="655,330 690,300 720,280 735,250"/></g></g>
<g clip-path="url(#t3)"><g transform="translate(519,79) scale(0.156371)"><polygon fill="#a4a4a4" points="45,0 585,0 590,40 615,52 635,40 640,0 780,0 780,210 720,260 690,330 700,400 680,440 630,450 600,400 590,340 560,310 580,260 580,225 540,240 480,260 450,290 400,320 360,300 345,250 370,215 385,195 350,195 320,175 290,195 250,225 215,240 220,280 200,330 180,370 220,380 260,365 300,345 305,380 290,420 250,450 190,460 170,520 140,520 120,430 80,360 20,340 10,310 45,290 50,220 80,190 115,140 115,95 80,80 50,60"/><polygon fill="#a4a4a4" points="0,470 50,455 110,480 120,520 0,520"/><polygon fill="#a4a4a4" points="295,465 320,455 328,475 305,485"/><polygon fill="#a4a4a4" points="600,480 650,470 690,490 680,520 610,520"/></g></g>
<g clip-path="url(#t4)"><g transform="translate(99,197) scale(0.253623)"><polygon fill="#a4a4a4" points="460,0 535,0 530,55 525,95 545,105 600,100 620,130 630,170 635,210 630,245 590,265 530,275 490,285 460,305 420,315 395,305 370,285 345,270 330,270 350,255 375,240 385,215 390,175 405,160 380,145 385,125 410,125 425,135 420,90 425,45 465,12"/><polygon fill="#a4a4a4" points="0,440 30,410 40,380 70,370 90,340 80,320 65,290 65,260 95,235 100,210 140,200 175,178 200,180 230,195 270,200 290,220 300,250 330,270 355,290 360,320 345,340 330,350 325,380 320,410 345,430 370,465 0,465"/><polygon fill="#a4a4a4" points="80,320 105,308 130,320 125,340 95,345"/><polygon fill="#a4a4a4" points="20,345 40,330 52,340 35,360"/><polygon fill="#a4a4a4" points="30,25 45,18 50,35 38,50 30,45"/><polygon fill="#a4a4a4" points="80,0 150,0 140,12 100,12"/><ellipse cx="695" cy="138" rx="64" ry="68" fill="none" stroke="#a4a4a4" stroke-width="13"/><polyline fill="none" stroke="#a4a4a4" stroke-width="5" stroke-linejoin="round" stroke-linecap="round" points="655,98 690,140 722,177"/><polyline fill="none" stroke="#a4a4a4" stroke-width="4" stroke-linejoin="round" stroke-linecap="round" points="700,90 680,110 655,120"/><polygon fill="#a4a4a4" points="660,45 680,42 688,55 668,60"/><polygon fill="#a4a4a4" points="630,0 720,0 710,20 670,30 640,25"/><polygon fill="#a4a4a4" points="640,295 665,285 690,300 685,325 655,330"/><polygon fill="#a4a4a4" points="710,375 730,340 760,320 800,300 828,295 828,465 740,465 715,430"/><polygon fill="#a4a4a4" points="630,420 660,400 695,410 700,440 680,465 640,465"/><polygon fill="#a4a4a4" points="480,465 510,445 555,450 560,465"/></g></g>
<g clip-path="url(#t5)"><g transform="translate(309,197) scale(0.253623)"><polygon fill="#a4a4a4" points="115,0 265,0 290,20 330,35 370,55 400,70 430,50 470,40 480,20 490,0 510,0 505,30 495,60 485,95 460,115 430,125 395,120 360,125 320,125 290,135 255,130 230,95 200,90 175,110 185,150 175,190 150,195 120,175 95,160 100,140 115,120 90,105 55,95 50,55 60,40 100,35 110,15"/><polygon fill="#a4a4a4" points="600,0 828,0 828,465 660,465 670,440 690,400 720,350 740,310 750,285 760,270 740,255 710,270 700,240 680,205 650,190 620,205 600,230 580,265 570,295 545,300 520,280 495,290 470,315 450,305 440,280 460,250 475,215 480,175 500,150 530,140 570,130 595,110 610,80 590,55 600,30"/><polygon fill="#a4a4a4" points="0,320 40,300 80,290 110,285 130,320 160,345 190,370 205,395 220,390 240,370 265,375 280,400 265,430 240,440 230,465 195,465 200,440 210,420 175,400 140,395 100,415 65,430 40,440 20,420 0,440"/><polygon fill="#a4a4a4" points="405,390 430,385 445,410 430,425 405,420"/><polygon fill="#a4a4a4" points="410,465 460,440 470,410 495,400 510,430 560,420 620,405 650,415 660,465"/><polygon fill="#a4a4a4" points="655,315 675,305 685,325 665,335"/></g></g>
<g clip-path="url(#t6)"><g transform="translate(519,197) scale(0.253623)"><polygon fill="#a4a4a4" points="0,0 105,0 110,40 85,65 45,80 0,75"/><polygon fill="#a4a4a4" points="15,110 30,105 38,120 22,128"/><polygon fill="#a4a4a4" points="0,140 15,160 35,215 60,220 100,235 145,225 180,240 195,275 185,300 170,320 185,345 175,350 150,340 125,320 100,285 95,300 120,330 150,350 200,360 235,380 255,410 270,465 0,465"/></g></g>
<g clip-path="url(#t7)"><g transform="translate(570,190) scale(0.192029)"><polygon fill="#a4a4a4" points="65,0 240,0 232,35 215,75 210,100 190,160 195,230 140,240 100,225 60,225 40,200 30,140 45,70 65,40"/><polygon fill="#a4a4a4" points="210,60 250,70 300,85 350,80 385,100 385,155 335,160 300,125 240,108 215,80"/><polygon fill="#a4a4a4" points="150,165 330,155 345,175 345,260 360,300 370,370 140,370 140,240"/><polygon fill="#a4a4a4" points="30,260 60,228 115,225 135,250 135,300 100,330 55,325 30,300"/><polygon fill="#a4a4a4" points="385,150 420,145 465,150 500,190 520,210 520,265 490,290 470,300 440,340 400,355 365,350 360,300 395,265 380,240 390,200"/><polygon fill="#a4a4a4" points="510,180 540,135 600,128 650,130 700,140 760,150 828,140 828,340 780,330 720,300 650,285 580,270 560,270 520,250"/><polygon fill="#a4a4a4" points="495,270 560,265 565,320 520,325 490,315"/><polygon fill="#a4a4a4" points="330,0 540,0 520,25 470,60 440,65 380,50 335,40"/></g></g>
<g clip-path="url(#t8)"><g transform="translate(519,197) scale(0.253623)"><polygon fill="#a4a4a4" points="300,248 430,248 400,262 370,280 340,288 310,280"/><polygon fill="#a4a4a4" points="195,355 235,380 255,410 270,470 195,470"/><polygon fill="#a4a4a4" points="325,320 340,290 380,280 420,255 470,250 520,265 555,290 570,275 600,268 625,290 645,310 690,320 720,335 748,350 752,380 740,405 745,430 720,440 690,440 640,435 630,465 480,465 470,440 440,420 420,445 400,455 375,440 350,410 320,390 315,360"/><polygon fill="#a4a4a4" points="815,420 828,415 828,465 812,465"/></g></g>
<g clip-path="url(#t9)"><g transform="translate(99,315) scale(0.253623)"><polygon fill="#a4a4a4" points="0,0 195,0 185,40 200,60 160,75 130,100 100,90 60,85 40,100 0,105"/><polygon fill="#a4a4a4" points="215,0 590,0 600,20 560,30 540,45 525,80 520,110 500,130 470,115 450,90 430,60 400,45 330,40 280,35 230,30 215,20"/><polygon fill="#a4a4a4" points="647,20 690,5 745,0 800,0 780,12 750,60 720,80 670,80 650,60"/><polygon fill="#a4a4a4" points="180,120 230,80 265,65 300,85 340,110 345,140 310,180 280,210 240,205 200,175 175,140"/></g></g>
<g clip-path="url(#t10)"><g transform="translate(99,350) scale(0.166023)"><polygon fill="#a4a4a4" points="0,80 60,95 130,60 150,35 190,30 210,50 260,40 300,50 320,80 330,100 310,140 290,180 270,220 240,260 210,290 170,310 150,320 120,340 90,370 60,395 30,410 0,400"/><polygon fill="#a4a4a4" points="265,0 520,0 490,30 460,60 440,95 400,110 360,105 330,80 300,45 270,25"/><polygon fill="#a4a4a4" points="455,110 490,95 525,110 530,150 500,180 465,160"/><polygon fill="#a4a4a4" points="665,150 690,95 720,80 745,90 730,140 690,170"/><polygon fill="#a4a4a4" points="0,405 39,402 85,370 117,330 150,357 189,389 221,383 254,402 287,435 306,467 303,510 156,510 137,467 111,435 78,428 39,435 0,441"/><polygon fill="#a4a4a4" points="330,360 350,330 420,320 470,310 500,340 540,350 570,390 580,420 560,450 520,460 480,450 450,420 420,430 380,430 340,410"/><polygon fill="#a4a4a4" points="560,510 580,455 640,440 700,430 740,410 770,300 789,260 789,510"/></g></g>
<g clip-path="url(#t11)"><g transform="translate(220,340) scale(0.185328)"><polygon fill="#a4a4a4" points="100,80 130,65 210,110 240,180 200,220 150,250 130,240 120,190 95,100"/><polygon fill="#a4a4a4" points="65,210 100,185 130,200 150,260 220,240 260,265 300,200 310,150 400,80 440,100 486,80 486,520 200,520 210,400 250,340 290,300 240,310 180,330 150,320 140,360 120,390 130,440 140,520 0,520 0,440 40,360 50,300 65,250"/></g></g>
<g clip-path="url(#t12)"><g transform="translate(309,315) scale(0.253623)"><polygon fill="#a4a4a4" points="185,0 245,0 240,30 225,60 215,95 200,115 180,100 185,60 180,20"/><polygon fill="#a4a4a4" points="410,0 828,0 828,165 800,215 785,250 800,280 828,300 828,480 435,480 430,420 445,390 465,355 500,345 540,355 585,350 620,340 600,330 580,320 545,332 535,318 560,300 590,290 600,260 600,205 580,180 555,185 520,190 490,170 460,145 420,130 388,118 380,90 395,60 410,30"/><polygon fill="#a4a4a4" points="315,295 350,290 400,290 425,275 430,250 450,245 465,265 450,290 450,330 440,360 420,390 395,410 365,400 345,370 320,350 310,320"/><polygon fill="#a4a4a4" points="0,155 40,140 55,115 75,95 90,110 85,170 60,195 20,205 60,220 80,240 70,270 40,275 20,290 0,280"/><polygon fill="#a4a4a4" points="0,320 20,345 30,400 50,410 70,380 80,355 100,360 110,385 100,410 130,440 140,480 0,480"/><polygon fill="#a4a4a4" points="205,310 218,300 225,318 210,325"/><polygon fill="#a4a4a4" points="415,395 440,345 470,345 462,400 440,480 415,480"/></g></g>
<g clip-path="url(#t13)"><g transform="translate(519,315) scale(0.253623)"><polygon fill="#a4a4a4" points="0,0 275,0 260,20 230,40 200,50 170,60 165,80 200,85 235,90 240,105 215,130 205,160 215,200 200,220 150,235 110,245 70,235 30,215 5,190 0,160"/><polygon fill="#a4a4a4" points="480,0 630,0 650,25 690,60 700,100 690,150 685,195 660,220 620,235 580,255 540,275 545,300 520,330 490,345 450,350 410,360 395,380 405,410 400,440 385,480 100,480 90,420 80,380 85,350 120,345 170,345 220,345 270,340 310,320 345,290 370,265 400,235 450,220 430,200 440,180 470,175 490,150 510,120 540,80 530,50 510,20"/><polygon fill="#a4a4a4" points="640,0 745,0 740,15 700,20"/><polygon fill="#a4a4a4" points="725,75 760,60 795,60 800,90 760,100 730,95"/><polygon fill="#a4a4a4" points="800,30 828,20 828,140 810,130 800,100 790,60"/><polygon fill="#a4a4a4" points="365,195 385,185 395,205 375,215"/><polygon fill="#a4a4a4" points="505,350 540,325 575,315 600,330 610,360 600,390 640,420 690,450 700,480 560,480 530,440 505,400"/><polygon fill="#a4a4a4" points="670,380 700,360 740,345 800,335 828,330 828,400 790,400 740,420 700,400"/><polygon fill="#a4a4a4" points="800,390 828,385 828,480 805,480"/><polygon fill="#a4a4a4" points="710,380 740,370 828,360 828,480 745,480 748,430 735,405"/><polygon fill="#a4a4a4" points="0,390 40,385 60,420 90,480 0,480"/><polygon fill="#a4a4a4" points="0,300 12,310 10,340 0,345"/><polygon fill="#a4a4a4" points="410,440 430,430 445,450 425,465"/></g></g>
<g clip-path="url(#t0)"><g transform="translate(99,79) scale(0.253623)"><polygon fill="#3dbffb" points="228,262 270,258 296,275 280,300 262,330 240,320 230,295"/></g></g>
<g clip-path="url(#t1)"><g transform="translate(309,79) scale(0.253623)"><polygon fill="#3dbffb" points="215,296 245,289 259,316 222,330 195,336 181,363 175,390 161,377 168,350 195,323"/></g></g>
<g clip-path="url(#t2)"><g transform="translate(519,79) scale(0.253623)"><polygon fill="#3dbffb" points="355,8 385,5 392,25 370,32"/><polygon fill="#3dbffb" points="92,92 110,95 108,110 92,108"/><polygon fill="#3dbffb" points="260,390 295,385 300,410 265,415"/></g></g>
<g clip-path="url(#t3)"><g transform="translate(519,79) scale(0.156371)"><polygon fill="#3dbffb" points="150,150 175,145 180,170 155,178"/></g></g>
<g clip-path="url(#t4)"><g transform="translate(99,197) scale(0.253623)"><polygon fill="#3dbffb" points="265,355 300,345 330,350 320,380 285,385 265,375"/></g></g>
<g clip-path="url(#t5)"><g transform="translate(309,197) scale(0.253623)"><polygon fill="#3dbffb" points="320,65 345,60 348,80 325,85"/><polygon fill="#3dbffb" points="95,350 125,340 140,365 110,380"/></g></g>
<g clip-path="url(#t8)"><g transform="translate(519,197) scale(0.253623)"><polygon fill="#3dbffb" points="570,290 595,280 605,300 590,320 580,345 568,335 575,310"/><polygon fill="#3dbffb" points="360,398 380,395 385,420 365,425"/><polygon fill="#3dbffb" points="425,395 450,390 455,410 430,415"/></g></g>
<g clip-path="url(#t10)"><g transform="translate(99,350) scale(0.166023)"><polygon fill="#3dbffb" points="228,455 280,452 290,475 240,480"/><polygon fill="#3dbffb" points="450,390 500,380 545,400 550,440 520,455 480,440"/></g></g>
<g clip-path="url(#t11)"><g transform="translate(220,340) scale(0.185328)"><polygon fill="#3dbffb" points="465,220 486,210 486,290 470,280"/></g></g>
<g clip-path="url(#t12)"><g transform="translate(309,315) scale(0.253623)"><polygon fill="#3dbffb" points="620,290 645,275 670,285 680,310 675,340 640,345 615,335"/><polygon fill="#3dbffb" points="790,375 828,365 828,385 800,385"/></g></g>
<g clip-path="url(#t13)"><g transform="translate(519,315) scale(0.253623)"><polygon fill="#3dbffb" points="15,140 50,135 55,155 20,160"/><polygon fill="#3dbffb" points="485,150 510,140 520,170 505,215 490,210"/><polygon fill="#3dbffb" points="545,150 580,145 585,165 550,170"/><polygon fill="#3dbffb" points="148,380 200,375 210,405 170,415 150,405"/></g></g>
<g clip-path="url(#t3)"><g transform="translate(519,79) scale(0.156371)"><polygon fill="#b4b4b4" points="85,260 130,240 175,230 180,250 130,280 95,310 80,300"/><polygon fill="#b4b4b4" points="320,160 350,145 355,170 330,175"/></g></g>
<g clip-path="url(#t4)"><g transform="translate(99,197) scale(0.253623)"><polygon fill="#b4b4b4" points="420,260 450,250 480,265 470,285 430,290"/></g></g>
<g clip-path="url(#t5)"><g transform="translate(309,197) scale(0.253623)"><polygon fill="#b4b4b4" points="635,60 670,55 680,75 645,85"/><polygon fill="#b4b4b4" points="620,150 660,130 700,110 710,130 650,160"/></g></g>
<g clip-path="url(#t7)"><g transform="translate(570,190) scale(0.192029)"><polygon fill="#b4b4b4" points="300,90 350,82 380,105 375,160 330,160 300,120"/><polygon fill="#b4b4b4" points="625,140 660,130 680,160 660,180"/></g></g>
<g clip-path="url(#t8)"><g transform="translate(519,197) scale(0.253623)"><polygon fill="#b4b4b4" points="635,390 670,370 680,400 660,420 635,415"/></g></g>
<g clip-path="url(#t10)"><g transform="translate(99,350) scale(0.166023)"><polygon fill="#b4b4b4" points="415,330 470,315 490,345 450,390 420,390"/></g></g>
<g clip-path="url(#t12)"><g transform="translate(309,315) scale(0.253623)"><polygon fill="#b4b4b4" points="615,45 640,35 690,90 670,110 630,80"/><polygon fill="#b4b4b4" points="625,160 645,125 660,135 640,175"/><polygon fill="#b4b4b4" points="480,310 500,300 505,335 485,340"/><polygon fill="#b4b4b4" points="425,385 445,375 455,420 435,430"/><polygon fill="#b4b4b4" points="425,385 445,375 455,420 435,430"/></g></g>
<g clip-path="url(#t13)"><g transform="translate(519,315) scale(0.253623)"><polygon fill="#b4b4b4" points="520,160 545,155 555,180 530,185"/><polygon fill="#b4b4b4" points="250,390 270,380 285,420 265,430"/><polygon fill="#b4b4b4" points="525,330 555,325 555,355 525,360"/><polygon fill="#b4b4b4" points="560,380 590,375 610,410 580,430"/></g></g>
</g></svg>
<svg class="a" style="left:0;top:0" width="828" height="518"><g fill="#1ea52c"><rect x="108.00" y="90.10" width="1.27" height="1.35"/><rect x="108.98" y="90.10" width="1.27" height="1.35"/><rect x="109.96" y="90.10" width="1.27" height="1.35"/><rect x="110.94" y="90.10" width="1.27" height="1.35"/><rect x="111.92" y="90.10" width="1.27" height="1.35"/><rect x="108.00" y="91.14" width="1.27" height="1.35"/><rect x="108.00" y="92.18" width="1.27" height="1.35"/><rect x="108.00" y="93.22" width="1.27" height="1.35"/><rect x="108.98" y="93.22" width="1.27" height="1.35"/><rect x="109.96" y="93.22" width="1.27" height="1.35"/><rect x="110.94" y="93.22" width="1.27" height="1.35"/><rect x="111.92" y="93.22" width="1.27" height="1.35"/><rect x="111.92" y="94.26" width="1.27" height="1.35"/><rect x="111.92" y="95.30" width="1.27" height="1.35"/><rect x="108.00" y="96.34" width="1.27" height="1.35"/><rect x="108.98" y="96.34" width="1.27" height="1.35"/><rect x="109.96" y="96.34" width="1.27" height="1.35"/><rect x="110.94" y="96.34" width="1.27" height="1.35"/><rect x="111.92" y="96.34" width="1.27" height="1.35"/><rect x="114.20" y="90.10" width="1.27" height="1.35"/><rect x="115.18" y="90.10" width="1.27" height="1.35"/><rect x="116.16" y="90.10" width="1.27" height="1.35"/><rect x="117.14" y="90.10" width="1.27" height="1.35"/><rect x="118.12" y="90.10" width="1.27" height="1.35"/><rect x="114.20" y="91.14" width="1.27" height="1.35"/><rect x="118.12" y="91.14" width="1.27" height="1.35"/><rect x="114.20" y="92.18" width="1.27" height="1.35"/><rect x="118.12" y="92.18" width="1.27" height="1.35"/><rect x="114.20" y="93.22" width="1.27" height="1.35"/><rect x="115.18" y="93.22" width="1.27" height="1.35"/><rect x="116.16" y="93.22" width="1.27" height="1.35"/><rect x="117.14" y="93.22" width="1.27" height="1.35"/><rect x="118.12" y="93.22" width="1.27" height="1.35"/><rect x="114.20" y="94.26" width="1.27" height="1.35"/><rect x="118.12" y="94.26" width="1.27" height="1.35"/><rect x="114.20" y="95.30" width="1.27" height="1.35"/><rect x="118.12" y="95.30" width="1.27" height="1.35"/><rect x="114.20" y="96.34" width="1.27" height="1.35"/><rect x="115.18" y="96.34" width="1.27" height="1.35"/><rect x="116.16" y="96.34" width="1.27" height="1.35"/><rect x="117.14" y="96.34" width="1.27" height="1.35"/><rect x="118.12" y="96.34" width="1.27" height="1.35"/><rect x="124.00" y="90.10" width="1.27" height="1.35"/><rect x="124.98" y="90.10" width="1.27" height="1.35"/><rect x="125.96" y="90.10" width="1.27" height="1.35"/><rect x="126.94" y="90.10" width="1.27" height="1.35"/><rect x="127.92" y="90.10" width="1.27" height="1.35"/><rect x="124.00" y="91.14" width="1.27" height="1.35"/><rect x="124.00" y="92.18" width="1.27" height="1.35"/><rect x="124.00" y="93.22" width="1.27" height="1.35"/><rect x="124.98" y="93.22" width="1.27" height="1.35"/><rect x="125.96" y="93.22" width="1.27" height="1.35"/><rect x="126.94" y="93.22" width="1.27" height="1.35"/><rect x="124.00" y="94.26" width="1.27" height="1.35"/><rect x="124.00" y="95.30" width="1.27" height="1.35"/><rect x="124.00" y="96.34" width="1.27" height="1.35"/><rect x="130.80" y="90.10" width="1.27" height="1.35"/><rect x="131.78" y="90.10" width="1.27" height="1.35"/><rect x="132.76" y="90.10" width="1.27" height="1.35"/><rect x="133.74" y="90.10" width="1.27" height="1.35"/><rect x="134.72" y="90.10" width="1.27" height="1.35"/><rect x="130.80" y="91.14" width="1.27" height="1.35"/><rect x="134.72" y="91.14" width="1.27" height="1.35"/><rect x="130.80" y="92.18" width="1.27" height="1.35"/><rect x="134.72" y="92.18" width="1.27" height="1.35"/><rect x="130.80" y="93.22" width="1.27" height="1.35"/><rect x="131.78" y="93.22" width="1.27" height="1.35"/><rect x="132.76" y="93.22" width="1.27" height="1.35"/><rect x="133.74" y="93.22" width="1.27" height="1.35"/><rect x="134.72" y="93.22" width="1.27" height="1.35"/><rect x="130.80" y="94.26" width="1.27" height="1.35"/><rect x="130.80" y="95.30" width="1.27" height="1.35"/><rect x="130.80" y="96.34" width="1.27" height="1.35"/><rect x="137.80" y="90.10" width="1.34" height="1.35"/><rect x="138.83" y="90.10" width="1.34" height="1.35"/><rect x="139.87" y="90.10" width="1.34" height="1.35"/><rect x="140.90" y="90.10" width="1.34" height="1.35"/><rect x="141.93" y="90.10" width="1.34" height="1.35"/><rect x="142.97" y="90.10" width="1.34" height="1.35"/><rect x="137.80" y="91.14" width="1.34" height="1.35"/><rect x="137.80" y="92.18" width="1.34" height="1.35"/><rect x="137.80" y="93.22" width="1.34" height="1.35"/><rect x="138.83" y="93.22" width="1.34" height="1.35"/><rect x="139.87" y="93.22" width="1.34" height="1.35"/><rect x="140.90" y="93.22" width="1.34" height="1.35"/><rect x="141.93" y="93.22" width="1.34" height="1.35"/><rect x="142.97" y="93.22" width="1.34" height="1.35"/><rect x="142.97" y="94.26" width="1.34" height="1.35"/><rect x="142.97" y="95.30" width="1.34" height="1.35"/><rect x="137.80" y="96.34" width="1.34" height="1.35"/><rect x="138.83" y="96.34" width="1.34" height="1.35"/><rect x="139.87" y="96.34" width="1.34" height="1.35"/><rect x="140.90" y="96.34" width="1.34" height="1.35"/><rect x="141.93" y="96.34" width="1.34" height="1.35"/><rect x="142.97" y="96.34" width="1.34" height="1.35"/></g></svg>
</body></html>
